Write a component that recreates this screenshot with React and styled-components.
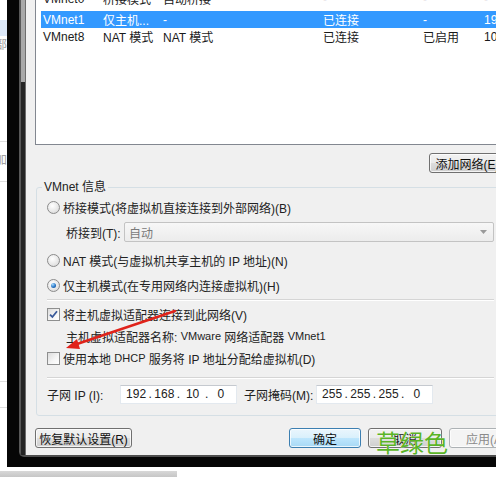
import React from "react";
import styled, { createGlobalStyle } from "styled-components";

const GlobalStyle = createGlobalStyle`
  *, *::before, *::after { box-sizing: border-box; }
  html, body { margin: 0; padding: 0; background: #fff; }
  body {
    font-family: "Liberation Sans", "Noto Sans CJK SC", sans-serif;
    font-size: 12px;
    color: #222;
    overflow: hidden;
  }
`;

const Screen = styled.div`
  position: relative;
  width: 496px;
  height: 479px;
  overflow: hidden;
  display: flex;
  flex-direction: column;
`;

const Desk = styled.div`
  display: flex;
  height: 467px;
  flex: none;
`;

/* sliver of the page behind the window */
const PageEdge = styled.div`
  width: 7px;
  flex: none;
  overflow: hidden;
  display: flex;
  flex-direction: column;
  background: #fff;
`;

const EdgeBlock = styled.div`
  flex: none;
  height: ${(p) => p.$h}px;
  margin-top: ${(p) => p.$mt || 0}px;
  background: ${(p) => p.$bg || "transparent"};
  border-top: ${(p) => (p.$line ? "1px solid #dedede" : "none")};
  color: #a0a0a0;
  font-size: 12px;
  line-height: ${(p) => p.$h}px;
  white-space: nowrap;
  text-indent: -5px;
`;

const Frame = styled.div`
  flex: 1;
  min-width: 0;
  display: flex;
  background: #060606;
  padding: 0 0 10px 12px;
`;

const Window = styled.div`
  flex: 1;
  min-width: 0;
  display: flex;
  overflow: hidden;
  border-bottom: 2px solid #4e4e4e;
  border-bottom-left-radius: 5px;
`;

const SideRail = styled.div`
  width: 7px;
  flex: none;
  border-left: 2px solid #585858;
  border-right: 1px solid #6c6c6c;
  background: linear-gradient(to bottom, #a8a8a8 0, #a8a8a8 82px, #242424 82px);
`;

const Dialog = styled.div`
  width: 480px;
  flex: none;
  background: #f0f0f0;
  padding: 0 0 9px 9px;
  display: flex;
  flex-direction: column;
`;

const ListBox = styled.div`
  height: 145px;
  flex: none;
  background: #fff;
  border: 1px solid #828790;
  border-top: none;
  overflow: hidden;
`;

const Rows = styled.div`
  margin-top: -10px;
`;

const ListRow = styled.div`
  display: grid;
  grid-template-columns: 60px 60px 160px 100px 61px 1fr;
  align-items: center;
  height: 17px;
  margin-left: 5px;
  margin-bottom: ${(p) => p.$after || 0}px;
  padding-left: 2px;
  white-space: nowrap;
  background: ${(p) => (p.$selected ? "#3399ff" : "transparent")};
  color: ${(p) => (p.$selected ? "#fff" : "#1a1a1a")};
`;

const ButtonBar = styled.div`
  display: flex;
  align-items: center;
  justify-content: ${(p) => p.$justify || "flex-start"};
  margin-top: ${(p) => p.$mt}px;
  gap: ${(p) => p.$gap || 0}px;
`;

const Button = styled.button`
  flex: none;
  width: ${(p) => p.$w}px;
  height: 20px;
  padding: 0;
  font: inherit;
  font-size: 12px;
  color: ${(p) => (p.$disabled ? "#8a8a8a" : "#111")};
  border: 1px solid
    ${(p) => (p.$primary ? "#3c7fb1" : p.$disabled ? "#adb2b5" : "#707070")};
  border-radius: 3px;
  box-shadow: inset 0 0 0 1px rgba(255, 255, 255, 0.75);
  background: ${(p) =>
    p.$primary
      ? "linear-gradient(#eaf6fd 0%, #d9f0fc 50%, #bee6fd 50%, #a7d9f5 100%)"
      : p.$disabled
      ? "#f4f4f4"
      : "linear-gradient(#f2f2f2 0%, #ebebeb 50%, #dddddd 50%, #cfcfcf 100%)"};
`;

const Spacer = styled.div`
  flex: none;
  width: ${(p) => p.$w}px;
`;

const Group = styled.fieldset`
  margin: 7px 0 0 1px;
  padding: 3px 11px 11px 10px;
  border: 1px solid #d5dfe5;
  border-radius: 3px;
  display: flex;
  flex-direction: column;
  min-width: 0;
`;

const Legend = styled.legend`
  margin-left: -5px;
  padding: 0 2px;
  line-height: 14px;
  font-size: 12px;
  color: #222;
`;

const Line = styled.div`
  display: flex;
  align-items: center;
  height: ${(p) => p.$h || 20}px;
  margin-top: ${(p) => p.$mt || 0}px;
  padding-left: ${(p) => p.$indent || 0}px;
  white-space: nowrap;
`;

const Rule = styled.div`
  height: 1px;
  margin-top: ${(p) => p.$mt}px;
  background: #d5d5d5;
  box-shadow: 0 1px 0 #fff;
`;

const Radio = styled.span`
  flex: none;
  width: 13px;
  height: 13px;
  margin-right: 3px;
  border-radius: 50%;
  border: 1px solid #8b8b8b;
  background: radial-gradient(circle at 40% 35%, #ffffff 0%, #e6e6e6 60%, #cfcfcf 100%);
  display: inline-flex;
  align-items: center;
  justify-content: center;

  &::after {
    content: "";
    display: ${(p) => (p.$on ? "block" : "none")};
    width: 5px;
    height: 5px;
    border-radius: 50%;
    background: radial-gradient(circle at 35% 30%, #a9dcff 0%, #2a78c8 55%, #15457f 100%);
  }
`;

const Check = styled.span`
  flex: none;
  width: 13px;
  height: 13px;
  margin-right: 3px;
  border: 1px solid #8e8f8f;
  background: linear-gradient(135deg, #dcdcdc 0%, #f6f6f6 60%, #ffffff 100%);
  display: inline-flex;
  align-items: center;
  justify-content: center;
`;

const FieldLabel = styled.span`
  flex: none;
  width: ${(p) => p.$w}px;
`;

/* Latin runs in the dialog use a narrower face than the CJK text */
const Latin = styled.span`
  font-size: 11px;
`;

const Select = styled.div`
  flex: 1;
  height: 20px;
  display: flex;
  align-items: center;
  justify-content: space-between;
  padding: 0 6px 0 4px;
  border: 1px solid #c3c3c3;
  border-radius: 2px;
  background: linear-gradient(#f7f7f7, #ececec);
  color: #7a7a7a;
`;

const IpBox = styled.div`
  flex: none;
  width: 117px;
  height: 19px;
  padding: 0 3px;
  display: grid;
  grid-template-columns: 1fr 4px 1fr 4px 1fr 4px 1fr;
  align-items: center;
  background: #fff;
  border: 1px solid #e3e9ef;
  border-top-color: #c5c9cf;
  font-size: 12px;
  color: #222;
`;

const Octet = styled.span`
  text-align: center;
`;

const Dot = styled.span`
  text-align: center;
`;

const BottomBand = styled.div`
  height: 6px;
  width: 177px;
  margin-top: 4px;
  background: linear-gradient(#d8d8d8, #c6c6c6);
`;

const Overlay = styled.svg`
  position: absolute;
  left: 0;
  top: 0;
  pointer-events: none;
`;

const Stamp = styled.div`
  position: absolute;
  left: 376px;
  top: 430px;
  font-family: "Noto Sans CJK SC", sans-serif;
  font-size: 24px;
  line-height: 24px;
  color: #5ab426;
  text-shadow: 0 0 1px #fff;
  pointer-events: none;
`;

const networks = [
  { name: "VMnet0", type: "桥接模式", ext: "自动桥接", host: "-", dhcp: "-", subnet: "-", after: 4 },
  { name: "VMnet1", type: "仅主机...", ext: "-", host: "已连接", dhcp: "-", subnet: "192.168.10.0", selected: true },
  { name: "VMnet8", type: "NAT 模式", ext: "NAT 模式", host: "已连接", dhcp: "已启用", subnet: "10.0.0.0" },
];

function Tick() {
  return (
    <svg width="9" height="9" viewBox="0 0 9 9">
      <path d="M1 4.6 L3.4 7 L8 1.2" fill="none" stroke="#3a5a9a" strokeWidth="1.8" />
    </svg>
  );
}

function Ip({ parts }) {
  return (
    <IpBox>
      {parts.map((p, i) => (
        <React.Fragment key={i}>
          {i > 0 && <Dot>.</Dot>}
          <Octet>{p}</Octet>
        </React.Fragment>
      ))}
    </IpBox>
  );
}

export default function App() {
  return (
    <>
      <GlobalStyle />
      <Screen>
        <Desk>
          <PageEdge>
            <EdgeBlock $h={20} />
            <EdgeBlock $h={16} $bg="#dde9f9" />
            <EdgeBlock $h={14} $mt={2}>部</EdgeBlock>
            <EdgeBlock $h={12} $mt={89} $line />
            <EdgeBlock $h={14}>加</EdgeBlock>
            <EdgeBlock $h={14} $mt={14} $line />
            <EdgeBlock $h={20} $mt={186} $line />
            <EdgeBlock $h={20} $mt={6} $line />
          </PageEdge>

          <Frame>
            <Window>
              <SideRail />
              <Dialog>
                <ListBox>
                  <Rows>
                    {networks.map((n) => (
                      <ListRow key={n.name} $selected={n.selected} $after={n.after}>
                        <span>{n.name}</span>
                        <span>{n.type}</span>
                        <span>{n.ext}</span>
                        <span>{n.host}</span>
                        <span>{n.dhcp}</span>
                        <span>{n.subnet}</span>
                      </ListRow>
                    ))}
                  </Rows>
                </ListBox>

                <ButtonBar $mt={8} $justify="flex-end">
                  <Button $w={77}>添加网络(E)</Button>
                </ButtonBar>

                <Group>
                  <Legend>VMnet 信息</Legend>
                  <Line>
                    <Radio />
                    桥接模式(将虚拟机直接连接到外部网络)(B)
                  </Line>
                  <Line $mt={5} $indent={19}>
                    <FieldLabel $w={58}>桥接到(T):</FieldLabel>
                    <Select>
                      <span>自动</span>
                      <svg width="7" height="4" viewBox="0 0 7 4">
                        <path d="M0 0 L7 0 L3.5 4 Z" fill="#9a9a9a" />
                      </svg>
                    </Select>
                  </Line>
                  <Line $mt={8}>
                    <Radio />
                    NAT 模式(与虚拟机共享主机的 IP 地址)(N)
                  </Line>
                  <Line $mt={5}>
                    <Radio $on />
                    仅主机模式(在专用网络内连接虚拟机)(H)
                  </Line>
                  <Rule $mt={4} />
                  <Line $mt={4}>
                    <Check>
                      <Tick />
                    </Check>
                    将主机虚拟适配器连接到此网络(V)
                  </Line>
                  <Line $mt={2} $indent={19}>
                    主机虚拟适配器名称:&nbsp;<Latin>VMware</Latin>&nbsp;网络适配器&nbsp;<Latin>VMnet1</Latin>
                  </Line>
                  <Line $mt={2}>
                    <Check />
                    使用本地&nbsp;<Latin>DHCP</Latin>&nbsp;服务将 IP 地址分配给虚拟机(D)
                  </Line>
                  <Rule $mt={9} />
                  <Line $mt={6}>
                    <FieldLabel $w={73}>子网 IP (I):</FieldLabel>
                    <Ip parts={["192", "168", "10", "0"]} />
                    <Spacer $w={7} />
                    <FieldLabel $w={72}>子网掩码(M):</FieldLabel>
                    <Ip parts={["255", "255", "255", "0"]} />
                  </Line>
                </Group>

                <ButtonBar $mt={12} $gap={7}>
                  <Button $w={97}>恢复默认设置(R)</Button>
                  <Spacer $w={143} />
                  <Button $w={72} $primary>确定</Button>
                  <Button $w={74}>取消</Button>
                  <Button $w={74} $disabled>应用(A)</Button>
                </ButtonBar>
              </Dialog>
            </Window>
          </Frame>
        </Desk>

        <BottomBand />

        <Overlay width="496" height="479" viewBox="0 0 496 479">
          <line x1="175" y1="311" x2="77" y2="344" stroke="#e0231b" strokeWidth="2.4" strokeLinecap="round" />
          <polygon points="66,348 80,349 77,339" fill="#e0231b" />
        </Overlay>
        <Stamp>草绿色</Stamp>
      </Screen>
    </>
  );
}
